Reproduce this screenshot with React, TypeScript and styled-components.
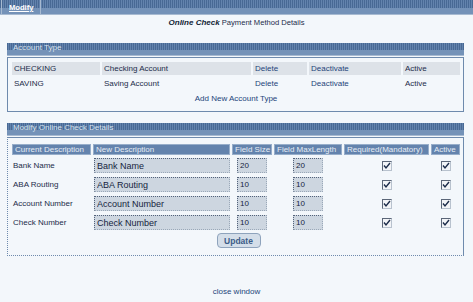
import React from 'react';
import styled, { createGlobalStyle } from 'styled-components';

type AccountType = {
  code: string;
  description: string;
};

type FieldRow = {
  label: string;
  value: string;
  size: string;
  maxLength: string;
};

const accountTypes: AccountType[] = [
  { code: 'CHECKING', description: 'Checking Account' },
  { code: 'SAVING', description: 'Saving Account' },
];

const fields: FieldRow[] = [
  { label: 'Bank Name', value: 'Bank Name', size: '20', maxLength: '20' },
  { label: 'ABA Routing', value: 'ABA Routing', size: '10', maxLength: '10' },
  { label: 'Account Number', value: 'Account Number', size: '10', maxLength: '10' },
  { label: 'Check Number', value: 'Check Number', size: '10', maxLength: '10' },
];

const CheckMark = () => (
  <CheckBox>
    <svg width="8" height="8" viewBox="0 0 8 8">
      <path d="M1 3.5 L3 6 L7 1" stroke="#1c2c4a" strokeWidth="1.4" fill="none" />
    </svg>
  </CheckBox>
);

const App = () => {
  return (
    <Page>
      <GlobalStyle />
      <TopBar>
        <Tab>Modify</Tab>
      </TopBar>
      <Title>
        <strong>Online Check</strong> Payment Method Details
      </Title>

      <Panel>
        <PanelHeader>Account Type</PanelHeader>
        <PanelBody $top={2} $bottom={5}>
          <Grid>
            <colgroup>
              <col style={{ width: 88 }} />
              <col style={{ width: 149 }} />
              <col style={{ width: 54 }} />
              <col style={{ width: 92 }} />
              <col />
            </colgroup>
            <tbody>
              {accountTypes.map((t, i) => (
                <tr key={t.code}>
                  <TypeCell $shaded={i === 0}>{t.code}</TypeCell>
                  <TypeCell $shaded={i === 0}>{t.description}</TypeCell>
                  <TypeCell $shaded={i === 0}><Link>Delete</Link></TypeCell>
                  <TypeCell $shaded={i === 0}><Link>Deactivate</Link></TypeCell>
                  <TypeCell $shaded={i === 0}>Active</TypeCell>
                </tr>
              ))}
            </tbody>
          </Grid>
          <AddRow>
            <Link>Add New Account Type</Link>
          </AddRow>
        </PanelBody>
      </Panel>

      <Panel $gap={11}>
        <PanelHeader>Modify Online Check Details</PanelHeader>
        <PanelBody $dotted $top={4} $bottom={7}>
          <Grid>
            <colgroup>
              <col style={{ width: 79 }} />
              <col style={{ width: 137 }} />
              <col style={{ width: 40 }} />
              <col style={{ width: 68 }} />
              <col style={{ width: 85 }} />
              <col />
            </colgroup>
            <thead>
              <tr>
                <HeadCell>Current Description</HeadCell>
                <HeadCell>New Description</HeadCell>
                <HeadCell>Field Size</HeadCell>
                <HeadCell>Field MaxLength</HeadCell>
                <HeadCell>Required(Mandatory)</HeadCell>
                <HeadCell>Active</HeadCell>
              </tr>
            </thead>
            <tbody>
              {fields.map(f => (
                <tr key={f.label}>
                  <FieldCell>{f.label}</FieldCell>
                  <FieldCell><TextInput value={f.value} readOnly /></FieldCell>
                  <FieldCell $center><SmallInput value={f.size} readOnly /></FieldCell>
                  <FieldCell $center><SmallInput value={f.maxLength} readOnly /></FieldCell>
                  <FieldCell $center><CheckMark /></FieldCell>
                  <FieldCell $center><CheckMark /></FieldCell>
                </tr>
              ))}
            </tbody>
          </Grid>
          <ButtonRow>
            <UpdateButton>Update</UpdateButton>
          </ButtonRow>
        </PanelBody>
      </Panel>

      <Footer>
        <Link>close window</Link>
      </Footer>
    </Page>
  );
};

export default App;

const GlobalStyle = createGlobalStyle`
  html, body {
    margin: 0;
    padding: 0;
    background: #f3f7fb;
  }
  body {
    font-family: 'Liberation Sans', Arial, sans-serif;
    font-size: 8px;
    color: #1c2c4a;
  }
`;

const textured = `
  background-color: #5f80aa;
  background-image:
    linear-gradient(to bottom, transparent 0, transparent 55%, #7492b8 55%, #7492b8 100%),
    repeating-linear-gradient(90deg, #486994 0, #486994 1px, #6383ad 1px, #6383ad 2px);
`;

const Page = styled.div`
  width: 473px;
  min-height: 302px;
  background: #f3f7fb;
`;

const TopBar = styled.div`
  display: flex;
  height: 14px;
  ${textured}
  border-bottom: 1px solid #a7bad1;
`;

const Tab = styled.div`
  display: flex;
  align-items: center;
  padding: 0 7px 0 7px;
  border-right: 1px solid #a7bad1;
  border-left: 1px solid #a7bad1;
  margin-left: 1px;
  color: #ffffff;
  font-weight: bold;
  font-size: 7.6px;
  text-decoration: underline;
`;

const Title = styled.div`
  margin-top: 3px;
  height: 10px;
  line-height: 10px;
  text-align: center;
  font-size: 7.6px;
  color: #1c2c4a;

  strong {
    font-style: italic;
    font-size: 8px;
    color: #101c34;
  }
`;

const Panel = styled.div<{ $gap?: number }>`
  margin: ${p => (p.$gap ?? 15)}px 9px 0 7px;
`;

const PanelHeader = styled.div`
  height: 12px;
  line-height: 10px;
  padding-left: 6px;
  ${textured}
  border-bottom: 1px solid #a7bad1;
  color: #d7e1ec;
  font-size: 8px;
  margin-bottom: 1px;
`;

const PanelBody = styled.div<{ $dotted?: boolean; $top: number; $bottom: number }>`
  border: 1px solid #6e8aad;
  border-left-style: ${p => (p.$dotted ? 'dotted' : 'solid')};
  border-bottom-style: ${p => (p.$dotted ? 'dotted' : 'solid')};
  padding: ${p => p.$top}px 1px ${p => p.$bottom}px 2px;
`;

const Grid = styled.table`
  width: 100%;
  border-collapse: separate;
  border-spacing: 2px;
  table-layout: fixed;
`;

const TypeCell = styled.td<{ $shaded?: boolean }>`
  height: 13px;
  padding: 0 2px;
  font-size: 8px;
  background: ${p => (p.$shaded ? '#dde2e8' : 'transparent')};
  white-space: nowrap;
`;

const Link = styled.span`
  color: #24457a;
`;

const AddRow = styled.div`
  height: 14px;
  line-height: 14px;
  text-align: center;
`;

const HeadCell = styled.th`
  height: 9px;
  padding: 0 2px;
  background: #6383ad;
  border: 1px solid #97aeca;
  color: #e6edf5;
  font-weight: normal;
  font-size: 8px;
  line-height: 9px;
  text-align: left;
  white-space: nowrap;
  overflow: hidden;
`;

const FieldCell = styled.td<{ $center?: boolean }>`
  height: 17px;
  padding: 0 0 0 ${p => (p.$center ? 0 : 1)}px;
  text-align: ${p => (p.$center ? 'center' : 'left')};
  font-size: 8px;
  white-space: nowrap;
`;

const inputLook = `
  box-sizing: border-box;
  height: 15px;
  padding: 0 2px;
  background: #cdd6e0;
  border: 1px dotted #53627a;
  border-right-color: #9aa8b8;
  border-bottom-color: #9aa8b8;
  font-family: 'Liberation Sans', Arial, sans-serif;
  color: #16243e;
  outline: none;
  vertical-align: middle;
`;

const TextInput = styled.input`
  ${inputLook}
  width: 136px;
  font-size: 9px;
`;

const SmallInput = styled.input`
  ${inputLook}
  width: 30px;
  font-size: 8px;
`;

const CheckBox = styled.span`
  display: inline-flex;
  align-items: center;
  justify-content: center;
  box-sizing: border-box;
  width: 10px;
  height: 10px;
  background: #f2f4f7;
  border: 1px solid #b8c2ce;
  border-top-color: #5b6678;
  border-left-color: #5b6678;
  vertical-align: middle;
`;

const ButtonRow = styled.div`
  display: flex;
  justify-content: center;
  padding: 0 0 0 5px;
`;

const UpdateButton = styled.button`
  box-sizing: border-box;
  height: 15px;
  width: 44px;
  padding: 0;
  background: #d4dee9;
  border: 1px solid #8ea3bc;
  border-radius: 4px;
  font-family: 'Liberation Sans', Arial, sans-serif;
  font-size: 8.5px;
  font-weight: bold;
  color: #3b5c88;
`;

const Footer = styled.div`
  margin-top: 31px;
  text-align: center;
  font-size: 8px;
`;
